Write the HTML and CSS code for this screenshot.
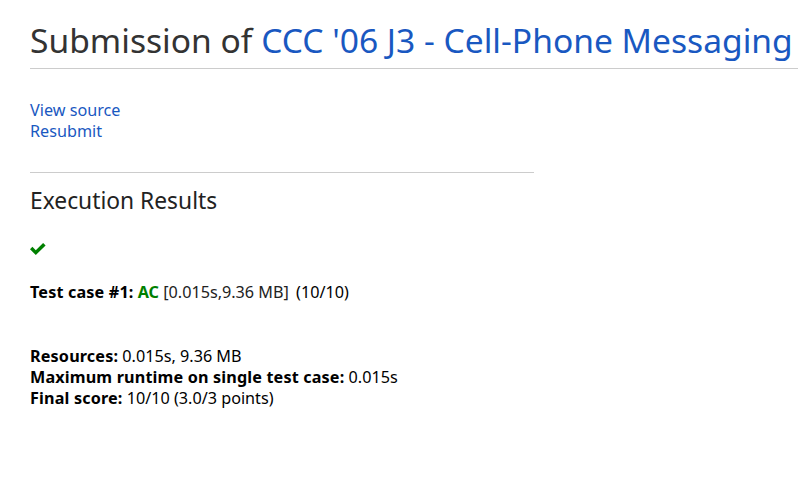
FILE: index.html
```html
<!DOCTYPE html>
<html lang="en">
<head>
  <meta charset="UTF-8">
  <title>Submission of CCC '06 J3 - Cell-Phone Messaging</title>
  <link rel="stylesheet" href="styles.css">
</head>
<body>

<div id="page-container">
  <h2 class="title">Submission of <a href="#">CCC '06 J3 - Cell-Phone Messaging</a></h2>
  <hr class="title-rule">

  <div id="content">
    <div class="actions">
      <a href="#">View source</a><br>
      <a href="#">Resubmit</a>
    </div>
    <hr class="section-rule">

    <h3 class="results-title">Execution Results</h3>
    <div class="status-icon">
      <svg width="16" height="12" viewBox="0 0 16 12"><path d="M0 6.2 L2.4 3.8 L5.8 7.2 L13.1 0 L15.6 2.5 L5.8 12 Z" fill="#008000"/></svg>
    </div>

    <div class="case-row">
      <b>Test case #1:</b> <span class="verdict-ac">AC</span> <span class="case-info">[0.015s,9.36 MB]</span> <span class="case-points">(10/10)</span>
    </div>

    <div class="summary">
      <b>Resources:</b> 0.015s, 9.36 MB<br>
      <b>Maximum runtime on single test case:</b> 0.015s<br>
      <b>Final score:</b> 10/10 (3.0/3 points)
    </div>
  </div>
</div>

</body>
</html>
```

FILE: styles.css
```css
body {
  margin: 0;
  padding: 0;
  font-family: "Noto Sans", "Open Sans", sans-serif;
  font-size: 16.2px;
  color: #000;
  background: #fff;
}
a { color: #1958c1; text-decoration: none; }
#page-container { padding: 18px 0 0 30px; }
.title {
  margin: 0;
  font-size: 33.6px;
  font-weight: normal;
  color: #333;
  white-space: nowrap;
  line-height: 44px;
}
.title-rule {
  margin: 6px 0 0 0;
  border: none;
  border-top: 1px solid #ccc;
}
#content { width: 504px; }
.actions {
  margin-top: 31px;
  line-height: 21px;
}
.section-rule {
  margin: 30px 0 0 0;
  border: none;
  border-top: 1px solid #ccc;
}
.results-title {
  margin: 13px 0 0 0;
  font-size: 22.8px;
  font-weight: normal;
  color: #222;
  line-height: 30px;
}
.status-icon { margin-top: 22px; height: 13px; }
.case-row { margin-top: 31px; line-height: 21px; }
.case-row b, .summary b { letter-spacing: 0.15px; }
.verdict-ac { color: #008000; font-weight: bold; }
.case-info { color: #222; }
.case-points { margin-left: 3px; }
.summary { margin-top: 43px; line-height: 21px; }
```
